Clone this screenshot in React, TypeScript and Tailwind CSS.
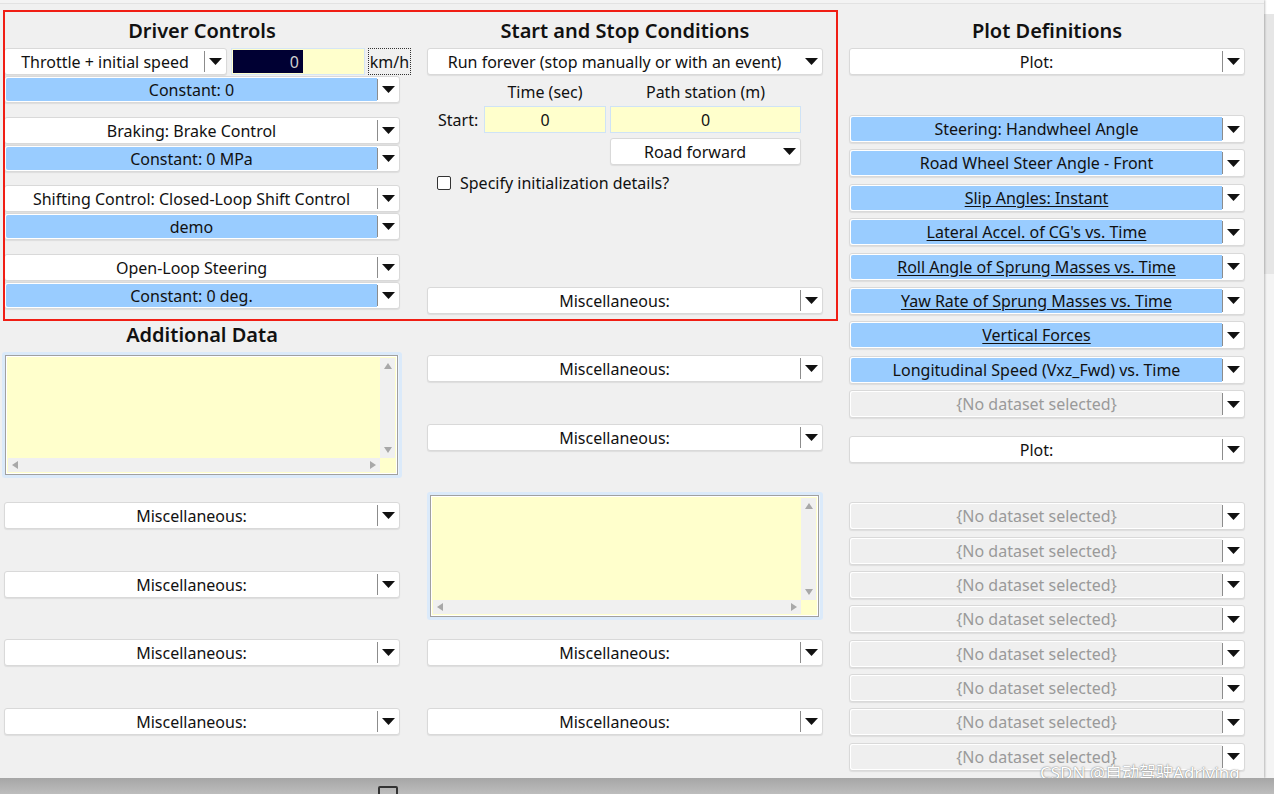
import React from "react";

const FONT = "font-['Noto_Sans','Open_Sans',sans-serif]";

function Arrow() {
  return (
    <svg width="13" height="7" viewBox="0 0 13 7" className="block">
      <polygon points="0,0 13,0 6.5,7" fill="#111" />
    </svg>
  );
}

type Variant = "white" | "blue" | "empty";

function Dropdown({
  label,
  variant = "white",
  underline = false,
  divider = true,
  h = "h-[27px]",
  className = "",
}: {
  label: string;
  variant?: Variant;
  underline?: boolean;
  divider?: boolean;
  h?: string;
  className?: string;
}) {
  const body =
    variant === "blue"
      ? "bg-[#99ccff] text-[#111]"
      : variant === "empty"
      ? "bg-[#efefef] text-[#9a9a9a]"
      : "bg-white text-[#111]";
  return (
    <div
      className={`${h} ${className} flex rounded-[3px] border border-[#d9d9d9] bg-white shadow-[0_1px_1px_rgba(0,0,0,0.08)] overflow-hidden`}
    >
      <div className={`flex-1 flex items-center justify-center m-[1px] mr-0 rounded-l-[2px] ${body}`}>
        <span className={`whitespace-nowrap text-[16px] leading-none ${underline ? "underline underline-offset-2" : ""}`}>
          {label}
        </span>
      </div>
      <div className={`w-[22px] flex items-center justify-center my-[2px] ${divider ? "border-l border-[#8c8c8c]" : ""}`}>
        <Arrow />
      </div>
    </div>
  );
}

function Heading({ children }: { children: React.ReactNode }) {
  return (
    <div className="h-[26px] flex items-center justify-center text-[20px] font-semibold text-[#111] leading-none">
      {children}
    </div>
  );
}

function TextBox({ outer, inner }: { outer: string; inner: string }) {
  return (
    <div className={`${outer} rounded-[3px] border-[3px] border-[#dbeafa] bg-[#eef5fc]`}>
      <div className={`${inner} border border-[#a0a0a0] bg-white p-[1px] flex flex-col`}>
        <div className="flex-1 flex bg-[#ffffcc] p-[1px]">
          <div className="flex-1 flex flex-col">
            <div className="flex-1" />
            <div className="h-[14px] bg-[#f0f0f0] flex items-center justify-between px-[4px]">
              <svg width="6" height="8" viewBox="0 0 6 8"><polygon points="6,0 6,8 0,4" fill="#a8a8a8" /></svg>
              <svg width="6" height="8" viewBox="0 0 6 8"><polygon points="0,0 0,8 6,4" fill="#a8a8a8" /></svg>
            </div>
          </div>
          <div className="w-[15px] flex flex-col">
            <div className="flex-1 bg-[#f0f0f0] flex flex-col items-center justify-between py-[5px]">
              <svg width="8" height="6" viewBox="0 0 8 6"><polygon points="0,6 8,6 4,0" fill="#a8a8a8" /></svg>
              <svg width="8" height="6" viewBox="0 0 8 6"><polygon points="0,0 8,0 4,6" fill="#a8a8a8" /></svg>
            </div>
            <div className="h-[14px]" />
          </div>
        </div>
      </div>
    </div>
  );
}

const plotRows: { label: string; underline?: boolean }[] = [
  { label: "Steering: Handwheel Angle" },
  { label: "Road Wheel Steer Angle - Front" },
  { label: "Slip Angles: Instant", underline: true },
  { label: "Lateral Accel. of CG's vs. Time", underline: true },
  { label: "Roll Angle of Sprung Masses vs. Time", underline: true },
  { label: "Yaw Rate of Sprung Masses vs. Time", underline: true },
  { label: "Vertical Forces", underline: true },
  { label: "Longitudinal Speed (Vxz_Fwd) vs. Time" },
];

export default function App() {
  return (
    <div className={`w-[1274px] h-[794px] bg-[#f0f0f0] relative overflow-hidden ${FONT}`}>
      <div className="flex h-[778px]">
        {/* main window */}
        <div className="w-[1264px] relative bg-[#f0f0f0] shadow-[1px_0_2px_rgba(0,0,0,0.25)]">
          <div className="h-[4px] border-b border-[#e2e2e2] bg-[#f3f3f3]" />
          <div className="flex pl-[4px]">
            {/* Driver Controls */}
            <div className="w-[396px] flex flex-col">
              <div className="mt-[14px]">
                <Heading>Driver Controls</Heading>
              </div>
              <div className="mt-[4px] flex items-center h-[27px] w-[407px]">
                <Dropdown label="Throttle + initial speed" className="w-[223px]" />
                <div className="ml-[4px] w-[134px] h-[27px] border border-[#d6e6f5] bg-[#ffffcc] p-[1px] flex">
                  <div className="w-[70px] bg-[#000033] flex items-center justify-end pr-[4px] text-[16px] text-[#cfcfcf]">0</div>
                </div>
                <div className="ml-[3px] w-[43px] h-[27px] border border-dotted border-[#333] flex items-center justify-center text-[16px] text-[#111]">
                  km/h
                </div>
              </div>
              <Dropdown label="Constant: 0" variant="blue" className="mt-[1px]" />
              <Dropdown label="Braking: Brake Control" className="mt-[14px]" />
              <Dropdown label="Constant: 0 MPa" variant="blue" className="mt-[1px]" />
              <Dropdown label="Shifting Control: Closed-Loop Shift Control" className="mt-[13px]" />
              <Dropdown label="demo" variant="blue" className="mt-[1px]" />
              <Dropdown label="Open-Loop Steering" className="mt-[14px]" />
              <Dropdown label="Constant: 0 deg." variant="blue" className="mt-[1px]" />
              <div className="mt-[13px]">
                <Heading>Additional Data</Heading>
              </div>
              <div className="-ml-[2px] mt-[4px]">
                <TextBox outer="w-[400px] h-[126px]" inner="h-[120px] w-[393px]" />
              </div>
              <Dropdown label="Miscellaneous:" className="mt-[24px]" />
              <Dropdown label="Miscellaneous:" className="mt-[42px]" />
              <Dropdown label="Miscellaneous:" className="mt-[41px]" />
              <Dropdown label="Miscellaneous:" className="mt-[42px]" />
            </div>

            {/* Start and Stop Conditions */}
            <div className="ml-[27px] w-[396px] flex flex-col">
              <div className="mt-[14px]">
                <Heading>Start and Stop Conditions</Heading>
              </div>
              <Dropdown label="Run forever (stop manually or with an event)" divider={false} className="mt-[4px]" />
              <div className="mt-[5px] h-[23px] flex items-center text-[16px] text-[#111]">
                <div className="w-[57px]" />
                <div className="w-[122px] text-center">Time (sec)</div>
                <div className="w-[4px]" />
                <div className="w-[191px] text-center">Path station (m)</div>
              </div>
              <div className="mt-[3px] h-[27px] flex items-center text-[16px] text-[#111]">
                <div className="w-[57px] pl-[11px]">Start:</div>
                <div className="w-[122px] h-[27px] border border-[#cfe3f6] bg-[#ffffcc] flex items-center justify-center">0</div>
                <div className="ml-[4px] w-[191px] h-[27px] border border-[#cfe3f6] bg-[#ffffcc] flex items-center justify-center">0</div>
              </div>
              <div className="mt-[5px] flex">
                <div className="w-[183px]" />
                <Dropdown label="Road forward" divider={false} className="w-[191px]" />
              </div>
              <div className="mt-[6px] h-[24px] flex items-center pl-[10px] text-[16px] text-[#111]">
                <div className="w-[14px] h-[14px] rounded-[2px] border border-[#333] bg-white" />
                <span className="ml-[9px]">Specify initialization details?</span>
              </div>
              <Dropdown label="Miscellaneous:" className="mt-[92px]" />
              <Dropdown label="Miscellaneous:" className="mt-[41px]" />
              <Dropdown label="Miscellaneous:" className="mt-[42px]" />
              <div className="mt-[41px]">
                <TextBox outer="w-[396px] h-[128px]" inner="h-[122px] w-[389px]" />
              </div>
              <Dropdown label="Miscellaneous:" className="mt-[19px]" />
              <Dropdown label="Miscellaneous:" className="mt-[42px]" />
            </div>

            {/* Plot Definitions */}
            <div className="ml-[26px] w-[396px] flex flex-col">
              <div className="mt-[14px]">
                <Heading>Plot Definitions</Heading>
              </div>
              <Dropdown label="Plot:" className="mt-[4px]" />
              <div className="mt-[40px] flex flex-col gap-[6.4px]">
                {plotRows.map((r) => (
                  <Dropdown key={r.label} label={r.label} variant="blue" underline={r.underline} h="h-[28px]" />
                ))}
                <Dropdown label="{No dataset selected}" variant="empty" h="h-[28px]" />
              </div>
              <Dropdown label="Plot:" className="mt-[18px]" />
              <div className="mt-[39px] flex flex-col gap-[6.4px]">
                {Array.from({ length: 8 }).map((_, i) => (
                  <Dropdown key={i} label="{No dataset selected}" variant="empty" h="h-[28px]" />
                ))}
              </div>
            </div>
          </div>

          {/* red annotation frame */}
          <div className="absolute left-[3px] top-[10px] w-[835px] h-[311px] border-2 border-[#f01e14] pointer-events-none" />

          {/* watermark */}
          <div className="absolute left-[1040px] top-[763px] text-[17px] leading-[20px] text-white whitespace-nowrap [text-shadow:0_0_1px_#777,0_0_2px_#999] font-['Noto_Sans','Noto_Sans_CJK_SC',sans-serif]">
            CSDN @自动驾驶Adriving
          </div>
        </div>

        {/* strip of the window behind */}
        <div className="w-[10px] bg-[#ebebeb] flex flex-col">
          <div className="h-[14px] bg-white" />
          <div className="h-[260px] bg-[#e6e6e6]" />
          <div className="flex-1 bg-[#f4f4f4]" />
        </div>
      </div>

      {/* bottom strip */}
      <div className="h-[16px] bg-gradient-to-b from-[#a6a6a6] to-[#bdbdbd] relative">
        <div className="absolute left-[378px] top-[8px] w-[20px] h-[10px] border-2 border-[#333] rounded-[2px]" />
      </div>
    </div>
  );
}
